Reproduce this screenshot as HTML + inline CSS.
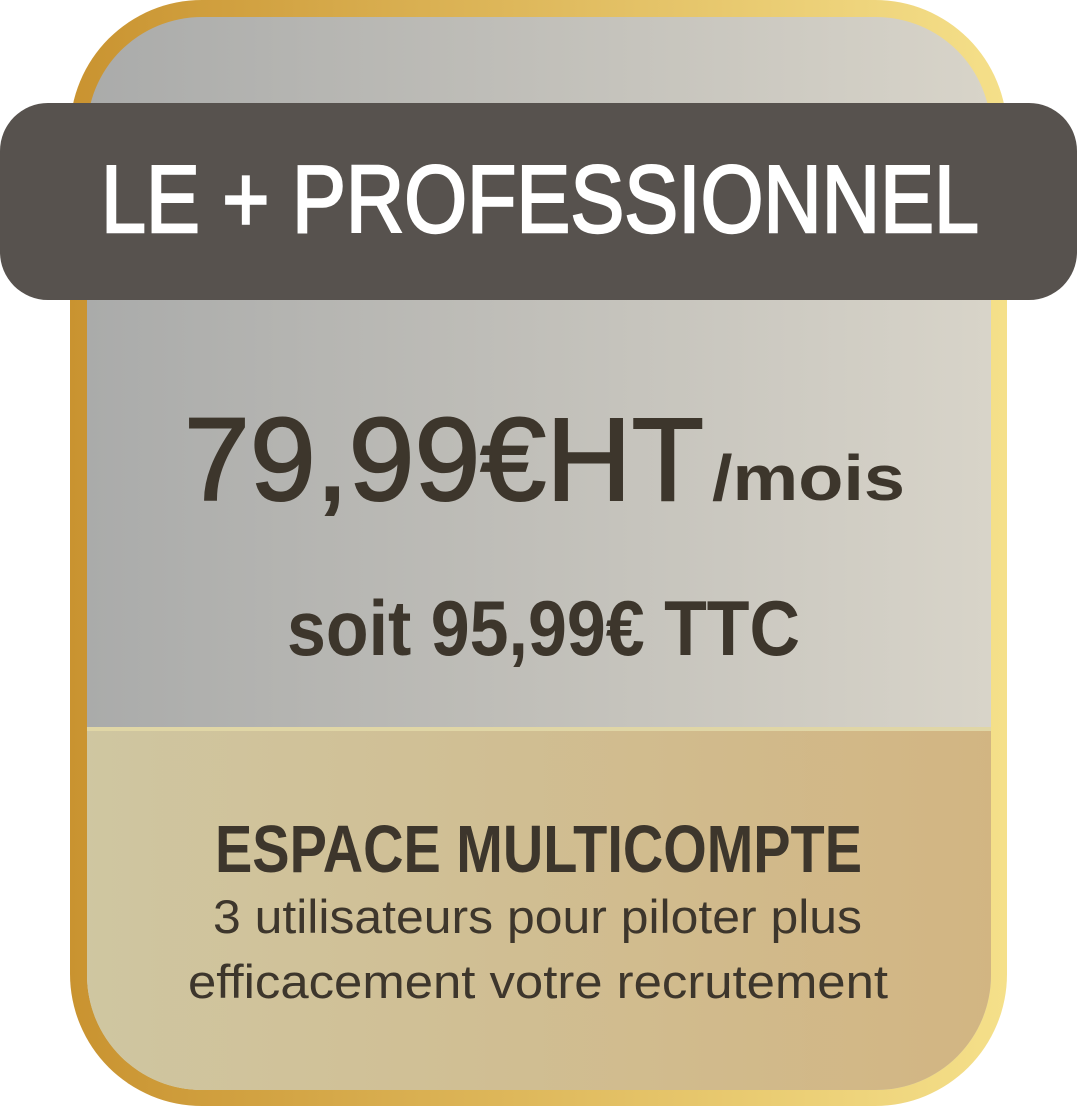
<!DOCTYPE html>
<html><head><meta charset="utf-8"><style>
html,body{margin:0;padding:0;background:#fff;width:1077px;height:1107px;overflow:hidden}
</style></head><body>
<svg width="1077" height="1107" viewBox="0 0 1077 1107" xmlns="http://www.w3.org/2000/svg">
<defs>
<linearGradient id="gold" x1="0" x2="1" y1="0" y2="0"><stop offset="0" stop-color="#c99330"/><stop offset="1" stop-color="#f5e08a"/></linearGradient>
<linearGradient id="grey" x1="0" x2="1"><stop offset="0" stop-color="#aaabaa"/><stop offset="1" stop-color="#d8d4c9"/></linearGradient>
<linearGradient id="beige" x1="0" x2="1"><stop offset="0" stop-color="#cfc6a1"/><stop offset="1" stop-color="#d2b582"/></linearGradient>
<clipPath id="inner"><rect x="87" y="17" width="904" height="1073" rx="115"/></clipPath>
</defs>
<rect x="70" y="0" width="937" height="1106" rx="132" fill="url(#gold)"/>
<g clip-path="url(#inner)">
<rect x="87" y="17" width="904" height="1073" fill="url(#grey)"/>
<rect x="80" y="727" width="920" height="370" fill="#e0d6a6"/>
<rect x="82" y="731" width="920" height="370" fill="url(#beige)"/>
</g>
<rect x="0" y="103" width="1077" height="197" rx="48" fill="#57524e"/>
<g font-family="Liberation Sans, sans-serif">
<text x="101" y="232" font-size="96" fill="#fff" stroke="#fff" stroke-width="2.5" textLength="878" lengthAdjust="spacingAndGlyphs">LE + PROFESSIONNEL</text>
<text x="184" y="500" font-size="118" fill="#3d362c" stroke="#3d362c" stroke-width="2" textLength="520" lengthAdjust="spacingAndGlyphs">79,99€HT</text>
<text x="712" y="500" font-size="64" font-weight="bold" fill="#3d362c" textLength="193" lengthAdjust="spacingAndGlyphs">/mois</text>
<text x="287" y="655" font-size="78" font-weight="bold" fill="#3d362c" textLength="513" lengthAdjust="spacingAndGlyphs">soit 95,99€ TTC</text>
<text x="215" y="872" font-size="67" font-weight="bold" fill="#3d362c" textLength="647" lengthAdjust="spacingAndGlyphs">ESPACE MULTICOMPTE</text>
<text x="213" y="933" font-size="47" fill="#3d362c" textLength="649" lengthAdjust="spacingAndGlyphs">3 utilisateurs pour piloter plus</text>
<text x="188" y="998" font-size="47" fill="#3d362c" textLength="700" lengthAdjust="spacingAndGlyphs">efficacement votre recrutement</text>
</g>
</svg>
</body></html>
